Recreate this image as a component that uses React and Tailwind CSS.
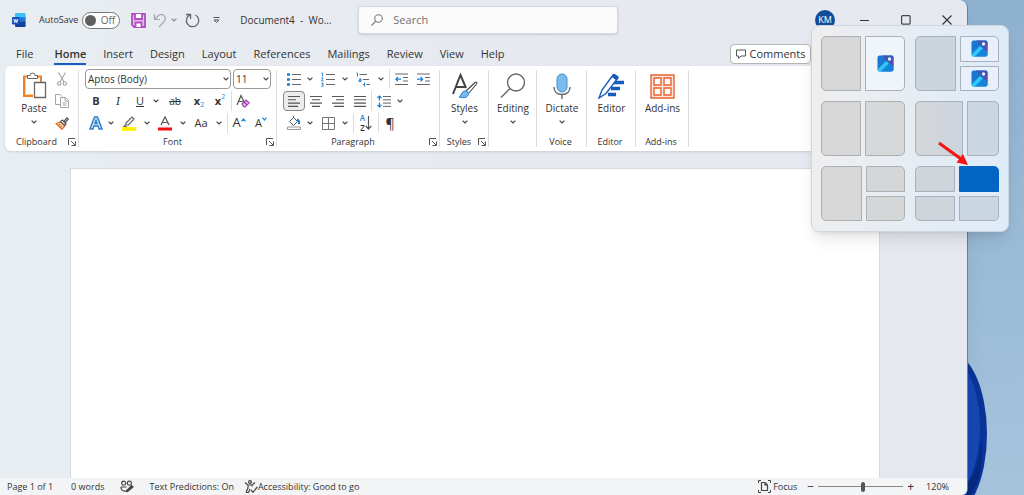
const Chevron = ({ className = 'w-3' }) => (
    <span className={`flex justify-center shrink-0 ${className}`}>
        <svg width="6" height="4" viewBox="0 0 6 4" fill="none" stroke="#444" strokeWidth="1.2">
            <path d="M0.6 0.6 3 3 5.4 0.6" />
        </svg>
    </span>
)

const Tool = ({ label, className = 'w-[22px]', children }) => (
    <button type="button" aria-label={label} className={`flex items-center justify-center shrink-0 h-5 ${className}`}>
        {children}
    </button>
)

const Divider = ({ className = '' }) => <span className={`w-px h-5 bg-[#dcdcdc] shrink-0 ${className}`} />

const Launcher = ({ label }) => (
    <button type="button" aria-label={label}>
        <svg width="8" height="8" viewBox="0 0 8 8" fill="none" stroke="#555">
            <path d="M0.5 7V0.5H7M3 3l4 4M7.5 3.5v4h-4" />
        </svg>
    </button>
)

const Group = ({ name, launcher, className, children }) => (
    <section aria-label={name} className={`relative flex flex-col shrink-0 pt-0.5 ${className}`}>
        <div className="h-[66px]">{children}</div>
        <div className="flex items-center h-4 pr-[3px] text-[9px]">
            <span className="flex-1 text-center whitespace-nowrap">{name}</span>
            {launcher && <Launcher label={`${name} settings`} />}
        </div>
        <span className="absolute right-0 top-1 bottom-1 w-px bg-[#dcdcdc]" />
    </section>
)

const BigButton = ({ label, menu, children }) => (
    <button type="button" className="flex flex-col items-center w-full pt-1 text-[10px] leading-4">
        <span className="flex items-center justify-center h-7">{children}</span>
        <span className="whitespace-nowrap">{label}</span>
        {menu && <Chevron className="w-3 pt-1" />}
    </button>
)

const Lines = ({ rows }) => (
    <svg width="14" height="13" viewBox="0 0 14 13" stroke="#555" strokeWidth="1.1">
        {rows.map(([a, b], i) => (
            <path key={i} d={`M${a} ${1.5 + i * 3.3}H${b}`} />
        ))}
    </svg>
)

const WordLogo = () => (
    <svg width="14" height="14" viewBox="0 0 14 14">
        <path d="M4 0h8.6a1 1 0 0 1 1 1v4H3V1a1 1 0 0 1 1-1Z" fill="#41c0f5" />
        <path d="M3 4.2h10.6v4.6H3z" fill="#1f78d8" />
        <path d="M3 8.6h10.6V13a1 1 0 0 1-1 1H4a1 1 0 0 1-1-1Z" fill="#123f9c" />
        <rect y="4" width="7.6" height="7.6" rx="1" fill="#1553b8" />
        <path d="m1.8 6 1 3.6 1-3.2 1 3.2 1-3.6" fill="none" stroke="#fff" strokeWidth=".9" />
    </svg>
)

const PhotoIcon = () => (
    <svg width="17" height="17" viewBox="0 0 17 17">
        <rect x=".5" y=".5" width="16" height="16" rx="2" fill="#1b78d0" />
        <path d="M5 .5h9.500a2 2 0 0 1 2 2V12L9 5Z" fill="#3f55b5" />
        <path d="M.5 14.500 8 7a1.600 1.600 0 0 1 2.400 0l1.600 1.600-8 7.900H2.500a2 2 0 0 1-2-2Z" fill="#2fc8f8" />
        <path d="m12 8.600 4.500 4v1.900a2 2 0 0 1-2 2H4Z" fill="#1585dc" />
        <circle cx="12.500" cy="4" r="1.700" fill="#e9f3ff" />
        <path d="M14.800 6.500h1.500M14.800 9h1.500" stroke="#c23ba5" />
    </svg>
)

const tabs = ['File', 'Home', 'Insert', 'Design', 'Layout', 'References', 'Mailings', 'Review', 'View', 'Help']

const TitleBar = () => (
    <header className="flex items-center h-10 pl-3">
        <WordLogo />
        <label className="flex items-center gap-1 ml-[13px] text-[9px]">
            AutoSave
            <span className="relative flex items-center justify-end w-[38px] h-[17px] pr-1 rounded-full border border-[#777] bg-white text-[10px] text-[#666]">
                <input type="checkbox" className="absolute left-0.5 top-0.5 size-[11px] appearance-none rounded-full bg-[#606060]" />
                Off
            </span>
        </label>
        <Tool label="Save" className="w-4 ml-2.5">
            <svg width="15" height="15" viewBox="0 0 15 15" fill="none" stroke="#b04fc0" strokeWidth="1.800">
                <path d="M1 1h13v13H3l-2-2Z" fill="#e6b6ec" />
                <path d="M4 1v5h7V1M4.500 14V9.500h6V14" fill="#fff" />
            </svg>
        </Tool>
        <Tool label="Undo" className="w-4 ml-1.5">
            <svg width="14" height="15" viewBox="0 0 14 15" fill="none" stroke="#a2a5aa" strokeWidth="1.200">
                <path d="M1.500 1v5.500H7M1.500 6.500 5 3c2-2 4.500-1.800 6-.4 1.800 1.700 1.800 4.200 0 6L6 14" />
            </svg>
        </Tool>
        <Chevron className="w-3 opacity-60" />
        <Tool label="Redo" className="w-4 ml-1">
            <svg width="15" height="15" viewBox="0 0 15 15" fill="none" stroke="#666" strokeWidth="1.300">
                <path d="M1 1.500h4.500V6M5.300 1.700A6.200 6.200 0 1 0 10.500 2" />
            </svg>
        </Tool>
        <Tool label="Customize toolbar" className="w-4 ml-2">
            <svg width="7" height="7" viewBox="0 0 7 7" fill="none" stroke="#555">
                <path d="M.5.5h6M1 3l2.500 2.500L6 3Z" />
            </svg>
        </Tool>
        <h1 className="ml-4 w-[118px] text-[10px] whitespace-pre">Document4  -  Wo...</h1>
        <label className="flex items-center gap-2.5 w-[260px] h-7 px-3 rounded-sm border border-[#d5d8dc] bg-[#fbfbfb] shadow-sm">
            <svg width="12" height="12" viewBox="0 0 12 12" fill="none" stroke="#777" strokeWidth="1.100">
                <circle cx="7.500" cy="4.500" r="3.800" />
                <path d="M4.800 7.200.5 11.500" />
            </svg>
            <input type="search" aria-label="Search" placeholder="Search" className="flex-1 min-w-0 text-[11px] outline-none placeholder:text-[#707070]" />
        </label>
        <div className="flex items-center ml-auto">
            <span className="flex items-center justify-center size-5 rounded-full bg-[#104f98] text-[9px] text-white">KM</span>
            <Tool label="Minimize" className="w-10 ml-2.5">
                <svg width="10" height="10" viewBox="0 0 10 10" stroke="#333">
                    <path d="M0 5.500h9" />
                </svg>
            </Tool>
            <Tool label="Maximize" className="w-[41px]">
                <svg width="10" height="10" viewBox="0 0 10 10" fill="none" stroke="#444" strokeWidth="1.200">
                    <rect x=".6" y=".6" width="8.500" height="8.500" rx="1" />
                </svg>
            </Tool>
            <Tool label="Close" className="w-[41px]">
                <svg width="10" height="10" viewBox="0 0 10 10" stroke="#333" strokeWidth="1.100">
                    <path d="m.5.500 9 9m0-9-9 9" />
                </svg>
            </Tool>
        </div>
    </header>
)

const Tabs = () => (
    <nav className="flex items-center h-[26px] pt-0.5 pl-4 text-[11px]">
        <div className="flex items-center gap-[17px]">
            {tabs.map((tab) => (
                <button
                    key={tab}
                    type="button"
                    className={tab === 'Home' ? 'h-[22px] ml-1 pt-0.5 border-b-2 border-[#185abd] font-semibold' : 'h-[22px]'}
                >
                    {tab}
                </button>
            ))}
        </div>
        <button type="button" className="flex items-center justify-center gap-1 w-[81px] h-5 ml-auto mr-[156px] rounded-sm border border-[#b5b5b5] bg-white text-[11px]">
            <svg width="10" height="10" viewBox="0 0 10 10" fill="none" stroke="#555">
                <path d="M.5 1h9v6H5L2.500 9.300V7h-2Z" />
            </svg>
            Comments
        </button>
    </nav>
)

const Clipboard = () => (
    <Group name="Clipboard" launcher className="w-[74px]">
        <div className="flex pl-[9px]">
            <button type="button" className="flex flex-col items-center w-10 pt-1 text-[10px] leading-4">
                <svg width="25" height="28" viewBox="0 0 25 28" fill="none">
                    <path d="M6 4.500H2V24h9M15 4.500h4V10" stroke="#f0812b" strokeWidth="2" />
                    <path d="M3.500 6v16.500H11" stroke="#f8d768" />
                    <path d="M5.500 6.500v-3H8a2.500 2.500 0 0 1 5 0h2.500v3Z" fill="#fff" stroke="#666" />
                    <path d="M12.500 10.500h11v15h-11Z" fill="#fff" stroke="#666" strokeWidth="1.300" />
                </svg>
                Paste
                <Chevron className="w-3 pt-1" />
            </button>
            <div className="flex flex-col items-center gap-0.5 pt-px">
                <Tool label="Cut" className="w-4">
                    <svg width="10" height="14" viewBox="0 0 10 14" fill="none" stroke="#a5a5a5" strokeWidth="1.100">
                        <path d="M1.500.5 7 10M8.500.5 3 10" />
                        <circle cx="2.200" cy="11.500" r="1.700" />
                        <circle cx="7.800" cy="11.500" r="1.700" />
                    </svg>
                </Tool>
                <Tool label="Copy" className="w-4">
                    <svg width="14" height="14" viewBox="0 0 14 14" fill="none" stroke="#a5a5a5">
                        <path d="M5 10.500H.5V.5H5L7 2.500" />
                        <path d="M5.500 3.500h5l3 3v7h-8ZM10 3.500v3.500h3.500M7.500 9h4M7.500 11h4" />
                    </svg>
                </Tool>
                <Tool label="Format painter" className="w-4">
                    <svg width="14" height="13" viewBox="0 0 14 13" fill="none" stroke="#555" strokeWidth="1.200">
                        <path d="M1 6.500 6 5l4 3.500-3 3.800Z" fill="#ffd9a0" stroke="#e8602c" />
                        <path d="m3.500 9 1.500-2M5.500 10.500 7 8.500" stroke="#e8602c" />
                        <path d="m5.500 4.500 2-1.500L11 7l-1.500 1.500ZM9 4.500 12 .8l1.300 1.300L10.300 5.500" fill="#fff" />
                    </svg>
                </Tool>
            </div>
        </div>
    </Group>
)

const Picker = ({ label, value, className }) => (
    <span className={`relative flex items-center h-5 rounded-sm border border-[#999] ${className}`}>
        <select aria-label={label} className="w-full h-full px-0.5 appearance-none text-[10px] outline-none">
            <option>{value}</option>
        </select>
        <span className="absolute right-0 pointer-events-none">
            <Chevron className="w-2" />
        </span>
    </span>
)

const Blue = () => (
    <svg width="5" height="4" viewBox="0 0 5 4" fill="none" stroke="#1e88d8" strokeWidth="1.200">
        <path d="M.5.600 2.500 3 4.500.6" />
    </svg>
)

const Font = () => (
    <Group name="Font" launcher className="w-[198px]">
        <div className="flex items-center gap-0.5 h-[22px] pl-1.5">
            <Picker label="Font" value="Aptos (Body)" className="w-[146px]" />
            <Picker label="Font size" value="11" className="w-[38px]" />
        </div>
        <div className="flex items-center h-[22px] pl-1.5 text-[11px]">
            <Tool label="Bold"><b>B</b></Tool>
            <Tool label="Italic"><i className="font-serif text-[12px]">I</i></Tool>
            <Tool label="Underline"><u>U</u></Tool>
            <Chevron className="w-2.5" />
            <Tool label="Strikethrough" className="w-7"><s className="text-[10px]">ab</s></Tool>
            <Tool label="Subscript" className="w-5">
                <b>x</b><span className="pt-2 text-[7px] text-[#1e88d8]">2</span>
            </Tool>
            <Tool label="Superscript">
                <b>x</b><span className="pb-2 text-[7px] text-[#1e88d8]">2</span>
            </Tool>
            <Divider />
            <Tool label="Clear formatting">
                <svg width="14" height="14" viewBox="0 0 14 14" fill="none" stroke="#555" strokeWidth="1.200">
                    <path d="M1 11 5 1.500 8 8M2.500 7.500H7" />
                    <path d="m6 10 4-4 3.200 2.800-4 4H8Z" fill="#e6b6ec" stroke="#a33fb5" />
                    <path d="m8 8 3.200 3" stroke="#a33fb5" />
                </svg>
            </Tool>
        </div>
        <div className="flex items-center h-[22px] pl-1.5 text-[11px]">
            <Tool label="Text effects">
                <svg width="14" height="14" viewBox="0 0 14 14" fill="#cfe5f8" stroke="#2f80cf" strokeWidth="1.500">
                    <path d="M1 13 5.500 1h3L13 13h-3L9 10H5l-1 3ZM6 7.500h2L7 4.500Z" />
                </svg>
            </Tool>
            <Chevron className="w-2" />
            <Tool label="Highlight" className="w-7">
                <svg width="14" height="15" viewBox="0 0 14 15" fill="none" stroke="#666" strokeWidth="1.200">
                    <path d="m4 7 6-6 2 2-5.500 6H4ZM4 8l-2 2.500h3" />
                    <path d="M0 13h14" stroke="#fff200" strokeWidth="4" />
                </svg>
            </Tool>
            <Chevron className="w-2" />
            <Tool label="Font color" className="w-7">
                <svg width="14" height="15" viewBox="0 0 14 15" fill="none" stroke="#555" strokeWidth="1.200">
                    <path d="M3 9 7 .8 11 9M4.500 6.500h5" />
                    <path d="M0 13h14" stroke="#f01010" strokeWidth="3" />
                </svg>
            </Tool>
            <Chevron className="w-2" />
            <Tool label="Change case" className="w-7">Aa</Tool>
            <Chevron className="w-2" />
            <Divider className="ml-1" />
            <Tool label="Grow font">
                <span className="text-[13px]">A</span><span className="-mt-1.5 rotate-180"><Blue /></span>
            </Tool>
            <Tool label="Shrink font">
                <span>A</span><span className="-mt-2"><Blue /></span>
            </Tool>
        </div>
    </Group>
)

const Paragraph = () => (
    <Group name="Paragraph" launcher className="w-[163px]">
        <div className="flex items-center h-[22px] pl-1.5">
            <Tool label="Bullets">
                <svg width="14" height="13" viewBox="0 0 14 13" stroke="#666">
                    <path d="M5 1.500h9M5 6.500h9M5 11.500h9" />
                    <path d="M0 1.500h3M0 6.500h3M0 11.500h3" stroke="#1e7fd0" strokeWidth="2.600" />
                </svg>
            </Tool>
            <Chevron className="w-2.5" />
            <Tool label="Numbering" className="w-[26px]">
                <svg width="14" height="15" viewBox="0 0 14 15" stroke="#666" fill="none">
                    <path d="M5 2.500h9M5 7.500h9M5 12.500h9" />
                    <path d="M.5 1h1v3.500M.3 6H2L.5 8.800h2M.3 11H2v1.600H1M2 12.600v1.700H.3" stroke="#1e7fd0" strokeWidth=".9" />
                </svg>
            </Tool>
            <Chevron className="w-2" />
            <Tool label="Multilevel list" className="w-7">
                <svg width="14" height="15" viewBox="0 0 14 15" stroke="#666" fill="none">
                    <path d="M3.500 2.500H11M7 7.500h6M10.500 12.500H14" />
                    <path d="M.5 1h1v3.500M3 7h2v2.500H3V8h2M8.500 10.500v4M7 12.500h1.500" stroke="#1e7fd0" />
                </svg>
            </Tool>
            <Chevron className="w-2" />
            <Divider className="ml-1" />
            <Tool label="Decrease indent" className="w-6">
                <svg width="14" height="13" viewBox="0 0 14 13" stroke="#666" fill="none">
                    <path d="M0 1h13M8 4.500h5M8 8h5M0 11.500h13" />
                    <path d="M6 6.200H.8M3 4 .8 6.200 3 8.400" stroke="#1e7fd0" strokeWidth="1.200" />
                </svg>
            </Tool>
            <Tool label="Increase indent" className="w-5">
                <svg width="14" height="13" viewBox="0 0 14 13" stroke="#666" fill="none">
                    <path d="M0 1h13M8 4.500h5M8 8h5M0 11.500h13" />
                    <path d="M0 6.200h5.500M3.500 4l2.200 2.200-2.200 2.200" stroke="#1e7fd0" strokeWidth="1.200" />
                </svg>
            </Tool>
        </div>
        <div className="flex items-center h-[22px] pl-1.5">
            <Tool label="Align left" className="w-[22px] rounded-sm border border-[#888] bg-[#ececec]">
                <Lines rows={[[1, 13], [1, 9], [1, 13], [1, 11]]} />
            </Tool>
            <Tool label="Center"><Lines rows={[[1, 13], [3, 11], [1, 13], [3, 11]]} /></Tool>
            <Tool label="Align right"><Lines rows={[[1, 13], [5, 13], [1, 13], [3, 13]]} /></Tool>
            <Tool label="Justify"><Lines rows={[[1, 13], [1, 13], [1, 13], [1, 13]]} /></Tool>
            <Divider />
            <Tool label="Line spacing" className="w-6">
                <svg width="14" height="13" viewBox="0 0 14 13" stroke="#666" fill="none">
                    <path d="M6 1.500h8M6 4.800h8M6 8.100h8M6 11.400h8" />
                    <path d="M2.500 5.500V1M.5 3l2-2 2 2M2.500 7.500V12M.5 10l2 2 2-2" stroke="#1e7fd0" strokeWidth="1.200" />
                </svg>
            </Tool>
            <Chevron className="w-2" />
        </div>
        <div className="flex items-center h-[22px] pl-1.5">
            <Tool label="Shading">
                <svg width="14" height="14" viewBox="0 0 14 14" stroke="#555" fill="none">
                    <path d="m2.500 5.500 4-4 4 4-4 4ZM6.500 1.500V0" />
                    <path d="M10 3.500c2 .5 2.500 2 2 4.500" stroke="#1e7fd0" strokeWidth="2" />
                    <path d="M.5 11h13v2.500H.5Z" stroke="#999" />
                </svg>
            </Tool>
            <Chevron className="w-2.5" />
            <Tool label="Borders" className="w-[26px]">
                <svg width="13" height="13" viewBox="0 0 13 13" stroke="#777" fill="none">
                    <path d="M.5.500h12v12H.5ZM6.500.500v12M.5 6.500h12" />
                </svg>
            </Tool>
            <Chevron className="w-2" />
            <Divider className="ml-1" />
            <Tool label="Sort" className="w-6">
                <span className="flex flex-col text-[8px] leading-[10px] font-semibold">
                    <span className="h-2.5 text-[#1e7fd0]">A</span>
                    <span className="h-2.5">Z</span>
                </span>
                <svg width="7" height="14" viewBox="0 0 7 14" stroke="#555" fill="none" strokeWidth="1.200">
                    <path d="M3.500 0v13M.8 10l2.700 3 2.700-3" />
                </svg>
            </Tool>
            <Divider />
            <Tool label="Show paragraph marks"><span className="text-[14px]">¶</span></Tool>
        </div>
    </Group>
)

const Ribbon = () => (
    <div className="flex shrink-0 h-[85px] ml-[5px] mr-1 rounded-md bg-white shadow overflow-hidden">
        <Clipboard />
        <Font />
        <Paragraph />
        <Group name="Styles" launcher className="w-[49px]">
            <BigButton label="Styles" menu>
                <svg width="26" height="26" viewBox="0 0 26 26" fill="none" stroke="#444">
                    <path d="M1 21 8.500 2 14 15M4 14h9" strokeWidth="2" />
                    <path d="M14 18 23 9.500c1.500-1 2.500 0 1.500 1.500L16.500 20.500" fill="#fff" strokeWidth="1.100" />
                    <path d="M7 24c2 0 2-5 5.500-6 2.500-.5 4.500 1.500 4 3.500-.8 3-5.500 4-9.500 2.500Z" fill="#7db8e8" stroke="#1e7fd0" />
                </svg>
            </BigButton>
        </Group>
        <Group name="" className="w-12">
            <BigButton label="Editing" menu>
                <svg width="26" height="26" viewBox="0 0 26 26" fill="none" stroke="#666" strokeWidth="1.400">
                    <circle cx="16" cy="9.500" r="8.500" />
                    <path d="m10 15.500-9 9" />
                </svg>
            </BigButton>
        </Group>
        <Group name="Voice" className="w-[50px]">
            <BigButton label="Dictate" menu>
                <svg width="18" height="26" viewBox="0 0 18 26" fill="none">
                    <rect x="4" y="1" width="10" height="18" rx="5" fill="#7cbbea" stroke="#3b8fd6" />
                    <path d="M1 14c0 4.500 3 7.500 8 7.500s8-3 8-7.500M9 21.500V26" stroke="#666" strokeWidth="1.400" />
                </svg>
            </BigButton>
        </Group>
        <Group name="Editor" className="w-[49px]">
            <BigButton label="Editor">
                <svg width="27" height="26" viewBox="0 0 27 26" fill="none" stroke="#185abd">
                    <path d="M16 9.500h10M13 15.500h9M10 21.500h8" strokeWidth="3.600" />
                    <path d="M1 25 4 17 15 2l4.500 3.500L8 20.500Z" fill="#fff" strokeWidth="1.400" />
                    <path d="m14 3.500 2-2.500 4.500 3-2 3Z" fill="#185abd" />
                </svg>
            </BigButton>
        </Group>
        <Group name="Add-ins" className="w-[53px]">
            <BigButton label="Add-ins">
                <svg width="25" height="25" viewBox="0 0 25 25" fill="none" stroke="#e8622f" strokeWidth="1.400">
                    <path d="M1 1h23v23H1Z" fill="#fde6dc" />
                    <path d="M4 4h7v7H4ZM14 4h7v7h-7ZM4 14h7v7H4ZM14 14h7v7h-7Z" fill="#fff" />
                </svg>
            </BigButton>
        </Group>
    </div>
)

const StatusBar = () => (
    <footer className="flex items-center shrink-0 h-[17px] pl-[7px] pr-[18px] bg-[#f3f4f5] text-[9px]">
        <span>Page 1 of 1</span>
        <span className="ml-[18px]">0 words</span>
        <svg className="ml-4" width="14" height="13" viewBox="0 0 15 13" fill="none" stroke="#444" strokeWidth="1.200">
            <circle cx="4" cy="3" r="2.200" />
            <circle cx="10" cy="3" r="2.200" />
            <path d="M1 7h6M1 7c0 3 1.500 4.500 5 4.500" />
            <path d="m6.500 11.500 6-6 1.500 1.500-6 5Z" fill="#444" />
        </svg>
        <span className="ml-[15px]">Text Predictions: On</span>
        <svg className="ml-2.5" width="14" height="13" viewBox="0 0 14 13" fill="none" stroke="#444" strokeWidth="1.200">
            <circle cx="6" cy="2" r="1.400" />
            <path d="M1 2.500 4 5v3l-2 4.500M11 2.500 8 5v1.500M4 5h4M2 12.500h2.500L6 9M7 10l2 2.300L13.300 7" />
        </svg>
        <span>Accessibility: Good to go</span>
        <button type="button" className="flex items-center gap-0.5 ml-auto">
            <svg width="13" height="13" viewBox="0 0 13 13" fill="none" stroke="#444">
                <path d="M3 .500H.5V3M10 .500h2.500V3M3 12.500H.5V10M10 12.500h2.500V10" />
                <path d="M3.500 2.500h3.500l2.500 2.500v5.500h-6ZM7 2.500V5h2.500" strokeWidth="1.200" />
            </svg>
            Focus
        </button>
        <button type="button" aria-label="Zoom out" className="ml-2.5 text-[12px]">−</button>
        <input
            type="range"
            aria-label="Zoom"
            min="10"
            max="200"
            defaultValue="110"
            className="w-[85px] h-px mx-1 appearance-none bg-[#888] [&::-webkit-slider-thumb]:appearance-none [&::-webkit-slider-thumb]:w-1 [&::-webkit-slider-thumb]:h-2.5 [&::-webkit-slider-thumb]:rounded-sm [&::-webkit-slider-thumb]:bg-[#555]"
        />
        <button type="button" aria-label="Zoom in" className="text-[12px]">+</button>
        <span className="ml-3">120%</span>
    </footer>
)

const Zone = ({ label, className, children }) => (
    <button
        type="button"
        aria-label={label}
        className={`flex items-center justify-center min-h-0 border ${className}`}
    >
        {children}
    </button>
)

const Layout = ({ children }) => <div className="flex gap-1 w-[84px] h-[55px]">{children}</div>

const Column = ({ children }) => <div className="flex flex-col flex-1 gap-1">{children}</div>

const SnapLayouts = () => (
    <div className="absolute top-[25px] right-[15px] w-[198px] px-[9px] py-2.5 rounded-lg border border-[#cfd5dc] bg-linear-to-r from-[#eeeeef] to-[#deebf8] shadow-lg">
        <div className="flex flex-wrap gap-2.5">
            <Layout>
                <Zone label="Left half" className="flex-1 rounded-l-[5px] border-[#adb0b3] bg-[#d7d7d7]" />
                <Zone label="Photos, right half" className="flex-1 rounded-r-[5px] border-[#adb0b3] bg-[#f0f5fc]"><PhotoIcon /></Zone>
            </Layout>
            <Layout>
                <Zone label="Left half" className="flex-1 rounded-l-[5px] border-[#a9b0b7] bg-[#ccd5de]" />
                <Column>
                    <Zone label="Photos, top right" className="flex-1 rounded-tr-[5px] border-[#a9b0b7] bg-[#e8f1fb]"><PhotoIcon /></Zone>
                    <Zone label="Photos, bottom right" className="flex-1 rounded-br-[5px] border-[#a9b0b7] bg-[#e8f1fb]"><PhotoIcon /></Zone>
                </Column>
            </Layout>
            <Layout>
                <Zone label="Left half" className="flex-1 rounded-l-[5px] border-[#adb0b3] bg-[#d7d7d7]" />
                <Zone label="Right half" className="flex-1 rounded-r-[5px] border-[#adb0b3] bg-[#d7d8d9]" />
            </Layout>
            <Layout>
                <Zone label="Left, wide" className="w-12 rounded-l-[5px] border-[#a9b0b7] bg-linear-to-r from-[#d5d6d7] to-[#cbd5df]" />
                <Zone label="Right, narrow" className="flex-1 rounded-r-[5px] border-[#a9b0b7] bg-[#cad6e2]" />
            </Layout>
            <Layout>
                <Zone label="Left half" className="flex-1 rounded-l-[5px] border-[#adb0b3] bg-[#d7d7d7]" />
                <Column>
                    <Zone label="Top right" className="flex-1 rounded-tr-[5px] border-[#adb0b3] bg-[#d5d6d8]" />
                    <Zone label="Bottom right" className="flex-1 rounded-br-[5px] border-[#adb0b3] bg-[#d5d6d8]" />
                </Column>
            </Layout>
            <Layout>
                <Column>
                    <Zone label="Top left" className="flex-1 rounded-tl-[5px] border-[#a9b0b7] bg-[#d0d5db]" />
                    <Zone label="Bottom left" className="flex-1 rounded-bl-[5px] border-[#a9b0b7] bg-[#d0d5db]" />
                </Column>
                <Column>
                    <Zone label="Top right quarter" className="flex-1 rounded-tr-[5px] border-[#0065c3] bg-[#0065c3]" />
                    <Zone label="Bottom right quarter" className="flex-1 rounded-br-[5px] border-[#a9b0b7] bg-[#cad6e1]" />
                </Column>
            </Layout>
        </div>
        <svg className="absolute right-[39px] top-[115px]" width="32" height="26" viewBox="0 0 32 26">
            <path d="M2 2 24 18" stroke="#f81414" strokeWidth="3" />
            <path d="m31 24-11.500-2.500L26 13Z" fill="#f81414" />
        </svg>
    </div>
)

export default function App() {
    return (
        <div className="relative flex min-h-screen overflow-hidden bg-linear-to-b from-[#8eb1cf] to-[#a6c3dc] font-['Open_Sans','Noto_Sans',sans-serif] text-[#333]">
            <svg className="absolute right-[37px] bottom-0" width="60" height="134" viewBox="0 0 60 134">
                <ellipse cx="20" cy="73" rx="40" ry="84" fill="#0a3499" />
                <ellipse cx="16" cy="66" rx="37" ry="74" fill="#1648b4" />
                <path d="M40 124Q54 104 54 76 58 112 44 134H40Z" fill="#062a80" />
            </svg>
            <main className="relative flex flex-col flex-1 min-w-0 mr-14 rounded-tr-lg rounded-br-md border-r border-[#4f83bd] bg-linear-to-r from-[#e8edf2] to-[#e5e8ef] shadow-xl overflow-hidden">
                <TitleBar />
                <Tabs />
                <Ribbon />
                <div className="flex flex-1 pt-[17px] pl-[70px] pr-[87px]">
                    <article aria-label="Document" className="flex-1 border border-b-0 border-[#d6d9de] bg-white" />
                </div>
                <StatusBar />
            </main>
            <SnapLayouts />
        </div>
    )
}
